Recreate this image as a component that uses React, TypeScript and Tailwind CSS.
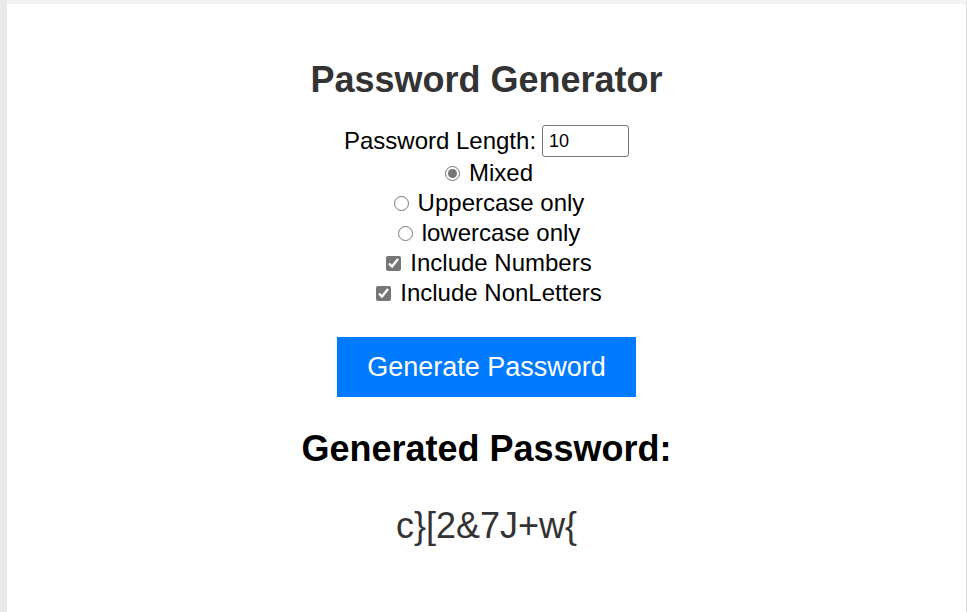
import React, { useState } from "react";

export default function App() {
  const [length, setLength] = useState("10");
  const [mode, setMode] = useState("mixed");
  const [numbers, setNumbers] = useState(true);
  const [nonLetters, setNonLetters] = useState(true);
  const password = "c}[2&7J+w{";

  return (
    <div className="min-h-[612px] bg-[#e9e9e9] pl-[7px] font-['Liberation_Sans',Arial,sans-serif]">
      <div className="min-h-[612px] border-t-4 border-r border-t-[#f3f3f3] border-r-[#dcdcdc] bg-white">
        <div className="flex flex-col items-center pt-[56px] text-[24px] leading-[30px] text-black">
          <h1 className="text-[36px] leading-[40px] font-bold text-[#333]">
            Password Generator
          </h1>

          <div className="mt-[25px] flex h-[33px] items-start">
            <span className="leading-[32px]">Password Length:</span>
            <input
              type="text"
              value={length}
              onChange={(e) => setLength(e.target.value)}
              className="ml-[6px] h-[32px] w-[87px] rounded-[3px] border border-[#767676] px-[6px] text-[18px] text-black"
            />
          </div>

          <label className="flex items-center">
            <input
              type="radio"
              name="mode"
              checked={mode === "mixed"}
              onChange={() => setMode("mixed")}
              className="mr-[9px] ml-[5px] size-[15px] accent-[#767676]"
            />
            Mixed
          </label>
          <label className="flex items-center">
            <input
              type="radio"
              name="mode"
              checked={mode === "upper"}
              onChange={() => setMode("upper")}
              className="mr-[9px] ml-[5px] size-[15px] accent-[#767676]"
            />
            Uppercase only
          </label>
          <label className="flex items-center">
            <input
              type="radio"
              name="mode"
              checked={mode === "lower"}
              onChange={() => setMode("lower")}
              className="mr-[9px] ml-[5px] size-[15px] accent-[#767676]"
            />
            lowercase only
          </label>
          <label className="flex items-center">
            <input
              type="checkbox"
              checked={numbers}
              onChange={() => setNumbers(!numbers)}
              className="mr-[9px] ml-[5px] size-[15px] accent-[#767676]"
            />
            Include Numbers
          </label>
          <label className="flex items-center">
            <input
              type="checkbox"
              checked={nonLetters}
              onChange={() => setNonLetters(!nonLetters)}
              className="mr-[9px] ml-[5px] size-[15px] accent-[#767676]"
            />
            Include NonLetters
          </label>

          <button className="mt-[29px] h-[60px] w-[299px] bg-[#007bff] text-[27px] text-white">
            Generate Password
          </button>

          <h2 className="mt-[32px] text-[36px] leading-[40px] font-bold text-black">
            Generated Password:
          </h2>

          <p className="mt-[37px] text-[36px] leading-[40px] text-[#333]">
            {password}
          </p>
        </div>
      </div>
    </div>
  );
}
